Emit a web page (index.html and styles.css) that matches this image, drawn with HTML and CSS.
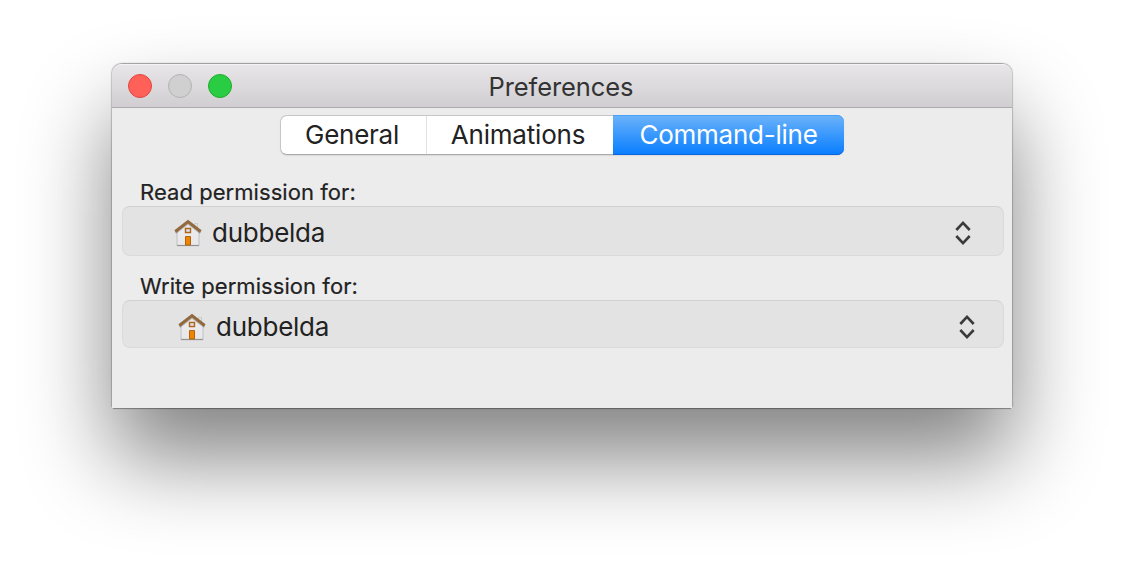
FILE: index.html
```html
<!DOCTYPE html>
<html lang="en">
<head>
<meta charset="utf-8">
<title>Preferences</title>
<link rel="stylesheet" href="styles.css">
</head>
<body>
<svg class="defs" width="0" height="0" aria-hidden="true">
  <defs>
    <linearGradient id="wall" x1="0" y1="0" x2="0" y2="1"><stop offset="0" stop-color="#ececee"/><stop offset="1" stop-color="#e8e8ea"/></linearGradient>
    <symbol id="house" viewBox="0 0 28 28">
      <path d="M20.500 4.500h3v6h-3z" fill="#e2e2e2" stroke="#cbcbcb"/>
      <path d="M3 12.500 14 3.500l11 9v14H3z" fill="url(#wall)" stroke="#b8b8ba" stroke-width=".8"/>
      <path d="M3 26.500h22" stroke="#929292" stroke-width="1.200"/>
      <path d="M1.500 13.800 14 4.300l12.500 9.500" fill="none" stroke="#666" stroke-opacity=".4" stroke-width="2.500"/>
      <path d="M1.300 12.500 14 2.700l12.700 9.800" fill="none" stroke="#92693e" stroke-width="2.900"/>
      <path d="M11.500 9.500h5v4h-5z" fill="#dce3ef" stroke="#b0651a" stroke-width="1.400"/>
      <path d="M11.500 17.500h5v8.500h-5z" fill="#ee8500" stroke="#b5640d"/>
    </symbol>
    <symbol id="updown" viewBox="0 0 16 26"><path d="M1.300 10 8 2.800l6.700 7.200M1.300 16 8 23.200l6.700-7.200" fill="none" stroke="#3b3b3b" stroke-width="2.600"/></symbol>
  </defs>
</svg>
<main class="window">
  <header class="titlebar">
    <div class="lights"><span class="light close"></span><span class="light minimize"></span><span class="light zoom"></span></div>
    <h1 class="title">Preferences</h1>
  </header>
  <nav class="tabs">
    <button class="tab general">General</button><button class="tab animations">Animations</button><button class="tab selected">Command-line</button>
  </nav>
  <section class="permissions">
    <div class="label read-label">Read permission for:</div>
    <div class="picker read"><svg class="house"><use href="#house"/></svg><span class="name">dubbelda</span><svg class="arrows"><use href="#updown"/></svg></div>
    <div class="label write-label">Write permission for:</div>
    <div class="picker write"><svg class="house"><use href="#house"/></svg><span class="name">dubbelda</span><svg class="arrows"><use href="#updown"/></svg></div>
  </section>
</main>
</body>
</html>
```
FILE: styles.css
```css
* { box-sizing: border-box; }
body { margin: 0; height: 568px; overflow: hidden; padding: 64px 112px; background: #fff; font-family: Inter, "Liberation Sans", sans-serif; color: #222; }
.defs { display: block; height: 0; }
.window { width: 900px; height: 344px; background: #ececec; border-radius: 10px 10px 0 0; box-shadow: 1px -1px 1px 0 rgba(0,0,0,.2), -1px -1px 1px 0 rgba(0,0,0,.2), 0 2px 1px -1px rgba(0,0,0,.35), 0 50px 88px rgba(0,0,0,.49); }
.titlebar { display: grid; grid-template-columns: 150px 1fr 150px; align-items: center; height: 44px; background: linear-gradient(#e8e6e9, #d1ced2); border-radius: 10px 10px 0 0; border-bottom: 1px solid #aeabaf; box-shadow: inset 0 2px 0 -1px #f5f4f5; }
.lights { display: flex; gap: 16px; padding-left: 16px; }
.light { width: 24px; height: 24px; border-radius: 50%; border: 1px solid; }
.close { background: #ff6159; border-color: #e2463f; }
.minimize { background: #d0d0d0; border-color: #b4b3b4; }
.zoom { background: #29cc42; border-color: #1dad2b; }
.title { margin: 0; padding: 3px 2px 0 0; text-align: center; font-size: 25.5px; font-weight: 400; line-height: 30px; letter-spacing: -.1px; color: #333; }
.tabs { display: flex; width: 564px; height: 40px; margin: 7px 0 0 168px; border-radius: 7px; background: #fff; border: 1px solid #c6c6c6; border-bottom-color: #ababab; box-shadow: 0 1px 1px rgba(0,0,0,.08); }
.tab { flex: none; height: 38px; padding: 0; border: 0; background: none; font: 400 26px/38px Inter, "Liberation Sans", sans-serif; letter-spacing: -.25px; color: #222; }
.general { width: 146px; padding-right: 3px; border-right: 1px solid #e1e1e1; }
.animations { width: 186px; letter-spacing: -.2px; padding-right: 4px; }
.selected { width: 231px; height: 40px; margin-top: -1px; border-radius: 0 7px 7px 0; background: linear-gradient(#6cb3fa, #077dff); box-shadow: inset 0 1px #4aa0f6, inset 0 -1px #0d65e2; color: #fff; line-height: 40px; letter-spacing: -.25px; }
.permissions { padding: 0 8px 0 10px; }
.label { padding-left: 18px; font-size: 22px; line-height: 30px; letter-spacing: .06px; -webkit-text-stroke: .2px #222; }
.read-label { margin-top: 22px; }
.write-label { margin-top: 15px; }
.picker { display: flex; align-items: center; width: 882px; border: 1px solid #dadada; border-top-color: #d1d1d1; border-radius: 8px; background: #e3e3e3; }
.read { height: 50px; margin-top: -1px; padding: 4px 32px 0 51px; }
.write { height: 48px; margin-top: -1px; padding: 6px 28px 0 55px; }
.house { width: 28px; height: 28px; }
.name { margin-left: 10px; font-size: 26px; line-height: 32px; letter-spacing: -.25px; }
.arrows { width: 16px; height: 26px; margin-left: auto; }
```
